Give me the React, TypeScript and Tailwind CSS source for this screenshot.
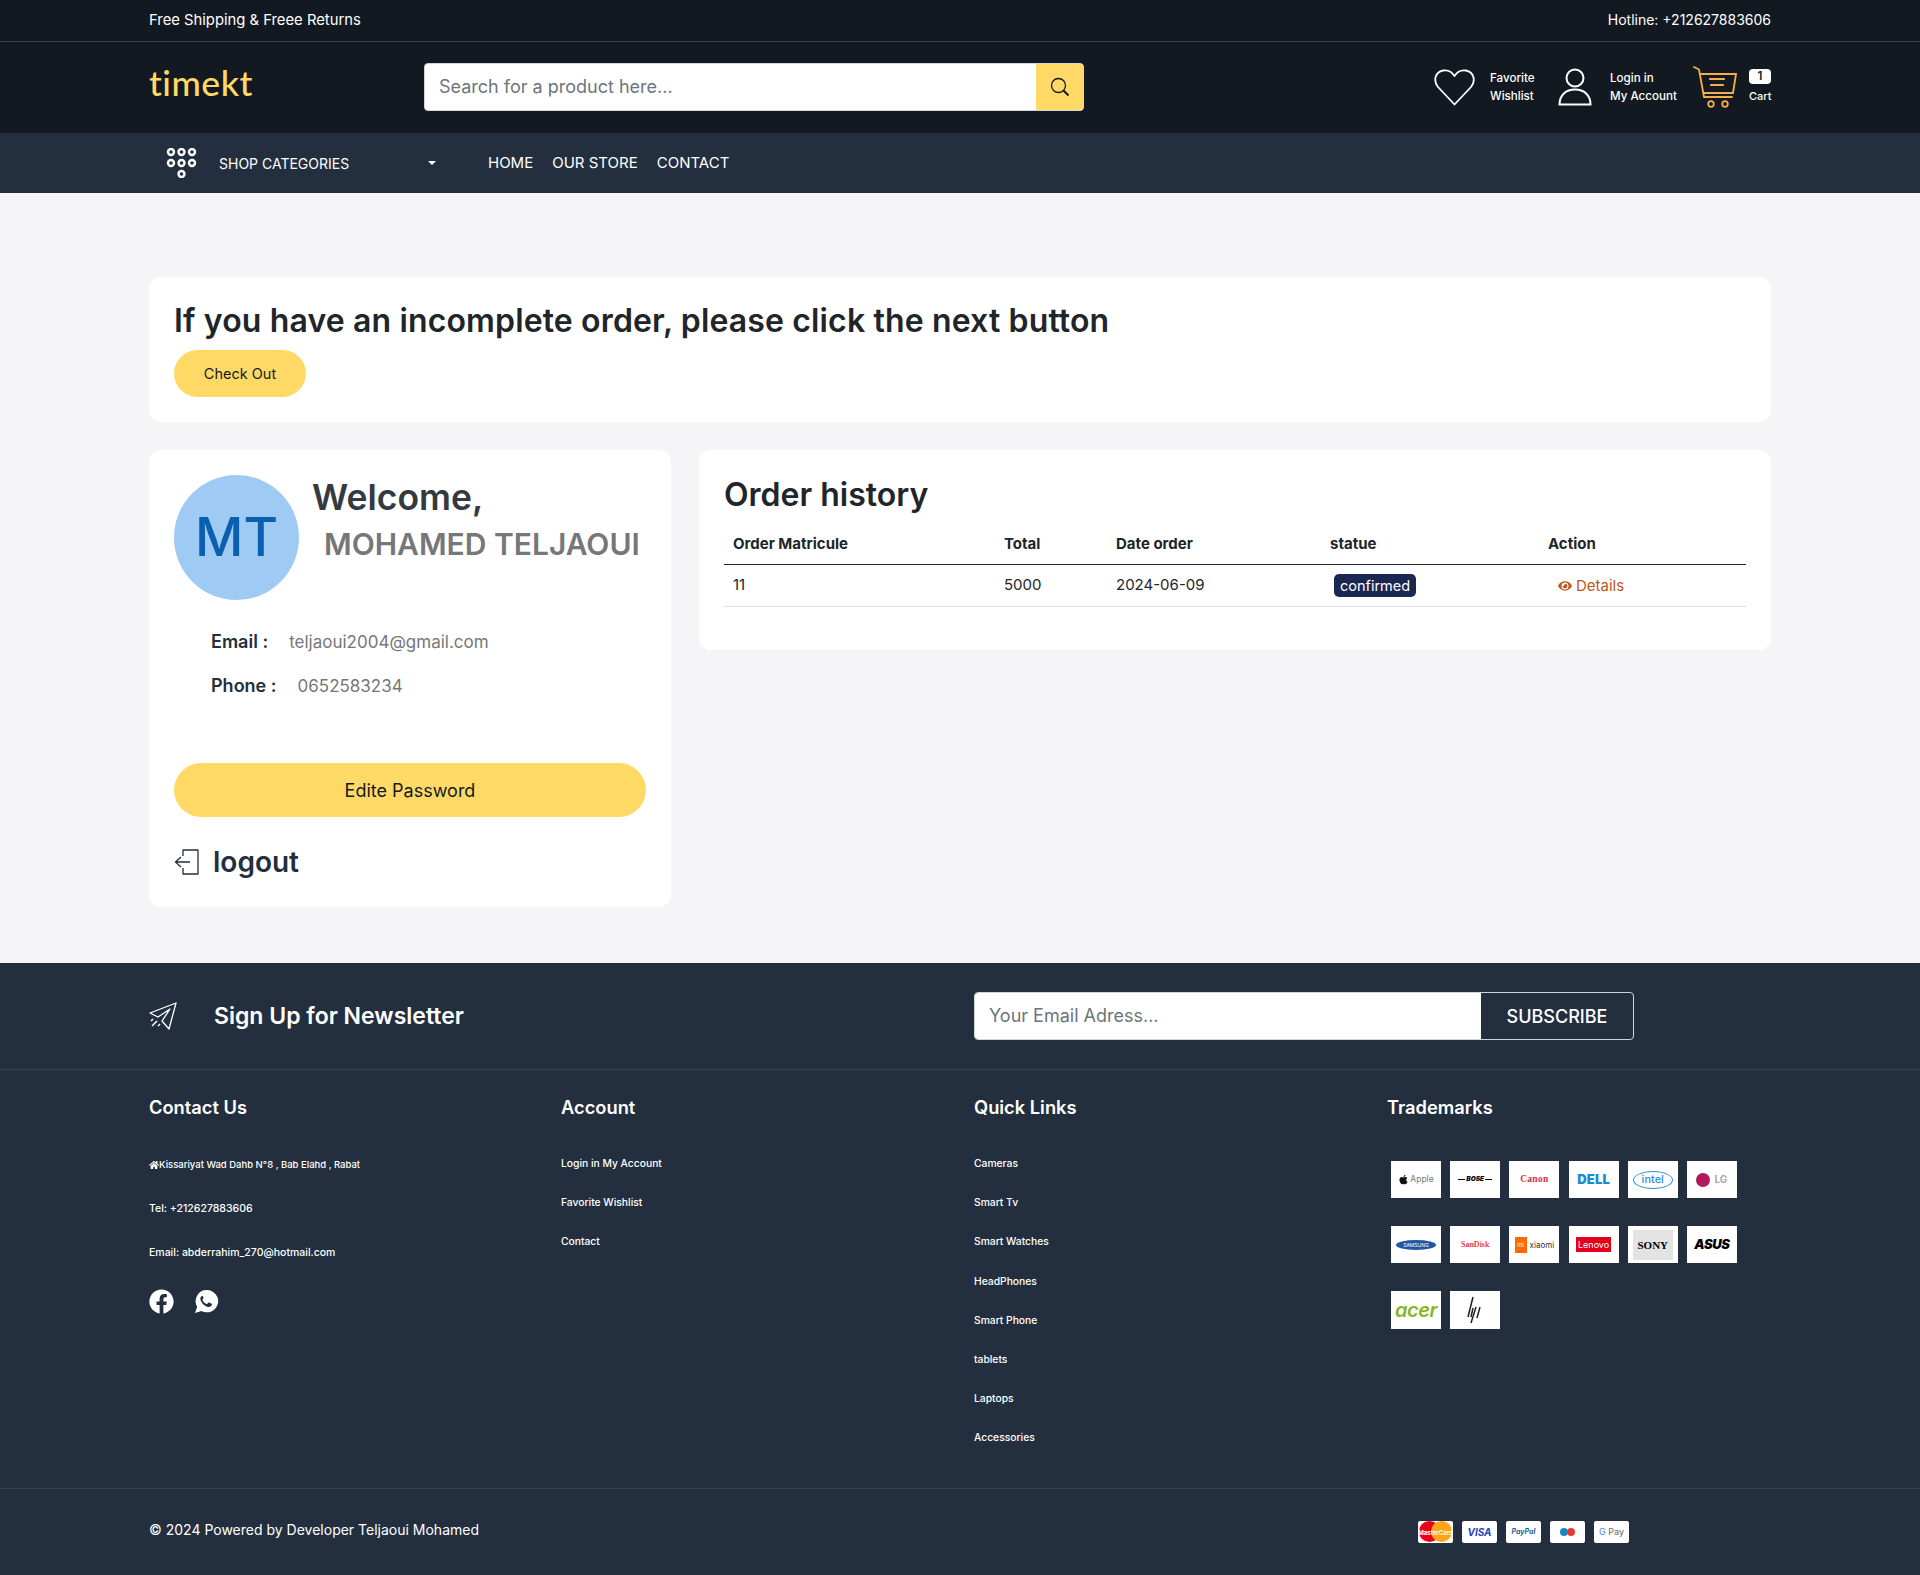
import { FaFacebook, FaHome, FaEye, FaApple } from "react-icons/fa";

const wrap = "w-[1622px] mx-auto";

function Dots() {
  const pts = [
    [6, 4], [16.5, 4], [27, 4],
    [6, 15], [16.5, 15], [27, 15],
    [16.5, 26],
  ];
  return (
    <svg width="32" height="30" viewBox="0 0 32 30" fill="none" stroke="#fff" strokeWidth="2.400">
      {pts.map(([x, y]) => (
        <circle key={`${x}-${y}`} cx={x} cy={y} r="3" />
      ))}
    </svg>
  );
}

function HeartIcon() {
  return (
    <svg width="41" height="37" viewBox="0 0 41 37" fill="none" stroke="#fff" strokeWidth="1.800" strokeLinejoin="round">
      <path d="M20.500 35.500 L4 18 C-1 12 1 3 9 1.500 C14 0.600 18 3 20.500 7 C23 3 27 0.600 32 1.500 C40 3 42 12 37 18 Z" />
    </svg>
  );
}

function UserIcon() {
  return (
    <svg width="34" height="38" viewBox="0 0 34 38" fill="none" stroke="#fff" strokeWidth="2">
      <circle cx="17" cy="10" r="8.500" />
      <path d="M1.500 36.500 C1.500 27 8 21.500 17 21.500 C26 21.500 32.500 27 32.500 36.500 Z" />
    </svg>
  );
}

function CartIcon() {
  return (
    <svg width="44" height="42" viewBox="0 0 44 42" fill="none" stroke="#f6ae4c" strokeWidth="1.800" strokeLinecap="round">
      <path d="M1 1 L6 3.500 L11 31 L39 31" />
      <path d="M7 8 L43 8 L40 27 L10.500 27" />
      <path d="M17 13 H31 M18 19 H30" strokeWidth="2.200" />
      <circle cx="18" cy="38" r="2.800" />
      <circle cx="32" cy="38" r="2.800" />
    </svg>
  );
}

function SearchIcon() {
  return (
    <svg width="20" height="20" viewBox="0 0 20 20" fill="none" stroke="#131921" strokeWidth="1.300">
      <circle cx="8.500" cy="8.500" r="7" />
      <path d="M13.500 13.500 L18.500 18.500" strokeWidth="2" />
    </svg>
  );
}

function PlaneIcon() {
  return (
    <svg width="28" height="28" viewBox="0 0 28 28" fill="none" stroke="#fff" strokeWidth="1.300" strokeLinejoin="round">
      <path d="M27 1 L1 11 L9 15 L21 7 L13 19 L20 27 Z" />
      <path d="M8 19 L3 24 M4 17 L2 19 M11 22 L9 24" strokeWidth="1.500" />
    </svg>
  );
}

function LogoutIcon() {
  return (
    <svg width="26" height="28" viewBox="0 0 26 28" fill="none" stroke="#232f3e" strokeWidth="1.300">
      <path d="M9 8 V2 H24 V26 H9 V20" strokeLinejoin="round" />
      <path d="M16 14 H2 M7 9 L1.500 14 L7 19" />
    </svg>
  );
}

function HpMark() {
  return (
    <svg width="16" height="28" viewBox="0 0 16 28" fill="none" stroke="#222" strokeWidth="1.500">
      <path d="M6 1 L1 21 M6 12 L4 21 M9 11 L4 27 M13 11 L10 22" />
    </svg>
  );
}

// solid bubble, the handset is cut out in the footer colour
function WhatsappIcon() {
  return (
    <svg width="25" height="25" viewBox="0 0 24 24">
      <path d="M12.500 1 A10.700 10.700 0 1 1 7.200 21 L1 23 L3 17 A10.700 10.700 0 0 1 12.500 1 Z" fill="#fff" />
      <path
        d="M8.500 6.500 c-.5 0 -1.300.3 -1.800 1 -.9 1.200 -.9 3 .6 5.200 1.600 2.400 3.600 3.900 6 4.500 1.700.4 3-.3 3.600-1.300 .3-.5.4-1.200.3-1.400 -.1-.2-.3-.3-.7-.5 l-2-1 c-.4-.2-.6-.2-.9.2 l-.8 1 c-.2.2-.4.3-.8.1 -1.800-.8-3-2.100-3.800-3.600 -.2-.4 0-.5.2-.8 l.6-.7 c.2-.3.2-.5.1-.8 l-.9-2.100 c-.2-.5-.4-.5-.7-.5 z"
        fill="#232f3e"
      />
    </svg>
  );
}

function Brand({ children, className }: { children: React.ReactNode; className?: string }) {
  return (
    <div className={`w-[50px] h-[37px] bg-white flex items-center justify-center overflow-hidden whitespace-nowrap ${className ?? ""}`}>
      {children}
    </div>
  );
}

function PayCard({ children }: { children: React.ReactNode }) {
  return (
    <div className="relative w-[35px] h-[22px] bg-white rounded-[2px] flex items-center justify-center overflow-hidden whitespace-nowrap">
      {children}
    </div>
  );
}

export default function App() {
  return (
    <div className="w-full min-h-[1575px] bg-[#f5f5f7] font-['Inter',sans-serif] text-[#212529]">
      {/* top strip */}
      <div className="h-[42px] bg-[#131921] border-b border-[#3b4149] text-white text-[14px]">
        <div className={`${wrap} h-[40px] flex items-center justify-between`}>
          <p className="text-[14.800px]">Free Shipping &amp; Freee Returns</p>
          <p className="pb-[1px]">Hotline: +212627883606</p>
        </div>
      </div>

      {/* header */}
      <div className="h-[91px] bg-[#131921]">
        <div className={`${wrap} h-full flex items-center pb-[1px]`}>
          <div className="w-[275px] text-[35.500px] leading-none tracking-[0.5px] font-medium text-[#ffd966] font-['Lato',sans-serif] mb-2">timekt</div>
          <div className="w-[660px] h-[48px] flex bg-white rounded-[4px] overflow-hidden border border-[#ced4da]">
            <div className="flex-1 px-[14px] pb-[2px] flex items-center text-[18px] text-[#6c757d]">Search for a product here...</div>
            <div className="w-[47px] bg-[#ffd966] flex items-center justify-center"><SearchIcon /></div>
          </div>
          <div className="ml-auto flex items-center text-white text-[11.600px] leading-[18px] font-medium">
            <HeartIcon />
            <div className="ml-[15px] w-[68px]">Favorite<br />Wishlist</div>
            <UserIcon />
            <div className="ml-[18px] w-[83px]">Login in<br />My Account</div>
            <CartIcon />
            <div className="ml-[12px] w-[22px]">
              <div className="w-[22px] h-[15px] bg-white rounded-[4px] text-[#131921] text-center leading-[15px] font-semibold">1</div>
              <div className="mt-[3px] text-[11px]">Cart</div>
            </div>
          </div>
        </div>
      </div>

      {/* nav */}
      <div className="h-[60px] bg-[#232f3e] text-white">
        <div className={`${wrap} h-full flex items-center`}>
          <div className="ml-[16px]"><Dots /></div>
          <span className="ml-[22px] w-[209px] text-[14px]">SHOP CATEGORIES</span>
          <span className="w-0 h-0 border-x-[4px] border-x-transparent border-t-[4px] border-t-white" />
          <div className="ml-[52px] flex gap-[19px] text-[15px]">
            <span>HOME</span>
            <span>OUR STORE</span>
            <span>CONTACT</span>
          </div>
        </div>
      </div>

      {/* main */}
      <div className={`${wrap} pt-[84px] h-[770px]`}>
        <div className="h-[145px] bg-white rounded-[12px] px-[25px] pt-[24px]">
          <h2 className="text-[32px] leading-[40px] font-semibold tracking-[0.14px]">If you have an incomplete order, please click the next button</h2>
          <button className="mt-[9px] w-[132px] h-[47px] bg-[#ffd966] rounded-full text-[14.500px] text-[#131921]">Check Out</button>
        </div>
        <div className="mt-[28px] flex items-start gap-[28px]">
          <div className="w-[522px] h-[457px] bg-white rounded-[12px] px-[25px] pt-[25px]">
            <div className="flex">
              <div className="w-[125px] h-[125px] rounded-full bg-[#9fcaf4] text-[#0b5fb0] flex items-center justify-center text-[53px] font-medium">MT</div>
              <div className="ml-[13px]">
                <h1 className="text-[35.500px] leading-[43px] mt-[1px] font-semibold text-[#343a40]">Welcome,</h1>
                <p className="ml-[12px] mt-[5px] text-[30px] leading-[40px] font-semibold text-[#777] whitespace-nowrap">MOHAMED TELJAOUI</p>
              </div>
            </div>
            <div className="mt-[29px] pl-[37px] leading-[26px] text-[#777] text-[17px]">
              <p><b className="text-[18px] font-semibold text-[#232f3e] mr-[21px]">Email :</b>teljaoui2004@gmail.com</p>
              <p className="mt-[18px]"><b className="text-[18px] font-semibold text-[#232f3e] mr-[21px]">Phone :</b>0652583234</p>
            </div>
            <button className="mt-[64px] block w-[472px] h-[54px] bg-[#ffd966] rounded-full text-[18px] text-[#131921]">Edite Password</button>
            <div className="mt-[28px] flex items-center gap-[13px] text-[#232f3e]">
              <LogoutIcon />
              <span className="text-[28px] leading-[34px] font-semibold">logout</span>
            </div>
          </div>

          <div className="flex-1 h-[200px] bg-white rounded-[12px] px-[25px] pt-[25px]">
            <h3 className="text-[32px] leading-[40px] font-semibold">Order history</h3>
            <div className="mt-[14px] h-[36px] flex items-center border-b border-[#212529] text-[15px] font-bold pb-[5px]">
              <span className="w-[280px] pl-[9px]">Order Matricule</span>
              <span className="w-[112px]">Total</span>
              <span className="w-[214px]">Date order</span>
              <span className="w-[218px]">statue</span>
              <span>Action</span>
            </div>
            <div className="h-[42px] flex items-center border-b border-[#dee2e6] text-[15px]">
              <span className="w-[280px] pl-[9px]">11</span>
              <span className="w-[112px]">5000</span>
              <span className="w-[214px]">2024-06-09</span>
              <span className="w-[218px] pl-[4px]">
                <span className="inline-block px-[6px] h-[23px] leading-[23px] text-[14.500px] bg-[#1b2651] text-white rounded-[5px]">confirmed</span>
              </span>
              <span className="pl-[10px] flex items-center gap-[4px] text-[#c0561a] mt-[1px]"><FaEye size={14} />Details</span>
            </div>
          </div>
        </div>
      </div>

      {/* footer */}
      <div className="bg-[#232f3e] text-white h-[612px]">
        <div className="h-[107px] border-b border-[#3b4149]">
          <div className={`${wrap} h-full flex items-center`}>
            <PlaneIcon />
            <h4 className="ml-[37px] w-[760px] text-[23px] font-semibold">Sign Up for Newsletter</h4>
            <div className="w-[660px] h-[48px] flex rounded-[4px] overflow-hidden border border-[#ced4da]">
              <div className="flex-1 bg-white px-[14px] pb-[2px] flex items-center text-[18px] text-[#6c757d]">Your Email Adress...</div>
              <div className="w-[152px] flex items-center justify-center text-[18px] font-medium">SUBSCRIBE</div>
            </div>
          </div>
        </div>

        <div className="h-[419px] border-b border-[#3b4149]">
          <div className={`${wrap} h-full grid grid-cols-[412px_413px_413px_1fr] pt-[25px]`}>
            <div>
              <h5 className="text-[18.300px] leading-[24px] font-semibold">Contact Us</h5>
              <p className="mt-[39px] flex items-center text-[9.500px] leading-[14px] font-medium"><FaHome size={10} />Kissariyat Wad Dahb N°8 , Bab Elahd , Rabat</p>
              <p className="mt-[30px] text-[10.500px] leading-[14px] font-medium">Tel: +212627883606</p>
              <p className="mt-[30px] text-[10.500px] leading-[14px] font-medium">Email: abderrahim_270@hotmail.com</p>
              <div className="mt-[29px] flex gap-[20px] items-center">
                <FaFacebook size={25} />
                <WhatsappIcon />
              </div>
            </div>
            <div>
              <h5 className="text-[18.300px] leading-[24px] font-semibold">Account</h5>
              <ul className="mt-[25px] text-[10.300px] leading-[39.200px] font-medium">
                <li>Login in My Account</li>
                <li>Favorite Wishlist</li>
                <li>Contact</li>
              </ul>
            </div>
            <div>
              <h5 className="text-[18.300px] leading-[24px] font-semibold">Quick Links</h5>
              <ul className="mt-[25px] text-[10.300px] leading-[39.200px] font-medium">
                <li>Cameras</li>
                <li>Smart Tv</li>
                <li>Smart Watches</li>
                <li>HeadPhones</li>
                <li>Smart Phone</li>
                <li>tablets</li>
                <li>Laptops</li>
                <li>Accessories</li>
              </ul>
            </div>
            <div>
              <h5 className="text-[18.300px] leading-[24px] font-semibold">Trademarks</h5>
              <div className="mt-[42px] ml-[4px] grid grid-cols-[repeat(6,50px)] gap-x-[9.200px] gap-y-[28px]">
                <Brand className="text-[8.500px] text-[#777] gap-[1px]"><FaApple size={11} color="#111" />Apple</Brand>
                <Brand className="gap-[1px] text-[6.500px] italic font-black text-black">
                  <span className="w-[7px] h-[1px] bg-black" />BOSE<span className="w-[7px] h-[1px] bg-black" />
                </Brand>
                <Brand className="text-[9.500px] font-bold tracking-[0.3px] font-['Liberation_Serif',serif] text-[#d9303a]">Canon</Brand>
                <Brand className="text-[13px] font-black tracking-[0.2px] text-[#1b8bd0]">DELL</Brand>
                <Brand><span className="w-[40px] h-[18px] rounded-[50%] border border-[#2a8fd8] text-[#2a8fd8] text-[11px] font-medium text-center leading-[15px]">intel</span></Brand>
                <Brand className="text-[10px] font-bold text-[#aaa] gap-[4px]"><span className="w-[14px] h-[14px] rounded-full bg-[#b2185c]" />LG</Brand>
                <Brand><span className="w-[40px] h-[10px] rounded-[50%] bg-[#22589f] text-white text-[5px] leading-[10px] text-center">SAMSUNG</span></Brand>
                <Brand className="text-[8px] font-bold text-[#ee3a4a] font-['Liberation_Serif',serif]">SanDisk</Brand>
                <Brand className="text-[8px] gap-[3px] text-[#333]"><span className="w-[12px] h-[16px] bg-[#ff6900] text-white text-[6px] text-center leading-[16px]">mi</span>xiaomi</Brand>
                <Brand><span className="w-[35px] h-[15px] bg-[#e2001a] text-white text-[9px] text-center leading-[15px]">Lenovo</span></Brand>
                <Brand><span className="w-[40px] h-[30px] bg-[#e3e3e3] text-black text-[11px] font-bold text-center leading-[30px] font-['Liberation_Serif',serif]">SONY</span></Brand>
                <Brand className="text-[13px] font-black italic text-black tracking-tight">ASUS</Brand>
                <Brand className="h-[38px] text-[20px] italic font-semibold text-[#83b81a] tracking-tight">acer</Brand>
                <Brand className="h-[38px]"><HpMark /></Brand>
              </div>
            </div>
          </div>
        </div>

        <div className={`${wrap} h-[86px] flex items-center justify-between`}>
          <p className="text-[14px] mb-[6px]">© 2024 Powered by Developer Teljaoui Mohamed</p>
          <div className="mr-[142px] flex gap-[9px]">
            <PayCard>
              <span className="absolute left-[1px] top-0 w-[21px] h-[21px] rounded-full bg-[#eb001b]" />
              <span className="absolute right-[1px] top-0 w-[21px] h-[21px] rounded-full bg-[#ffa41b]" />
              <span className="relative text-white text-[6px] font-bold">MasterCard</span>
            </PayCard>
            <PayCard><span className="text-[10px] font-bold italic text-[#2a3fb8]">VISA</span></PayCard>
            <PayCard><span className="text-[7px] font-bold italic text-[#1f5c99]">PayPal</span></PayCard>
            <PayCard>
              <span className="w-[8px] h-[8px] rounded-full bg-[#1f83c4]" />
              <span className="w-[8px] h-[8px] rounded-full bg-[#e8392f] -ml-[1px]" />
            </PayCard>
            <PayCard><span className="text-[9px] text-[#666]"><span className="text-[#4285f4]">G</span> Pay</span></PayCard>
          </div>
        </div>
      </div>
    </div>
  );
}
